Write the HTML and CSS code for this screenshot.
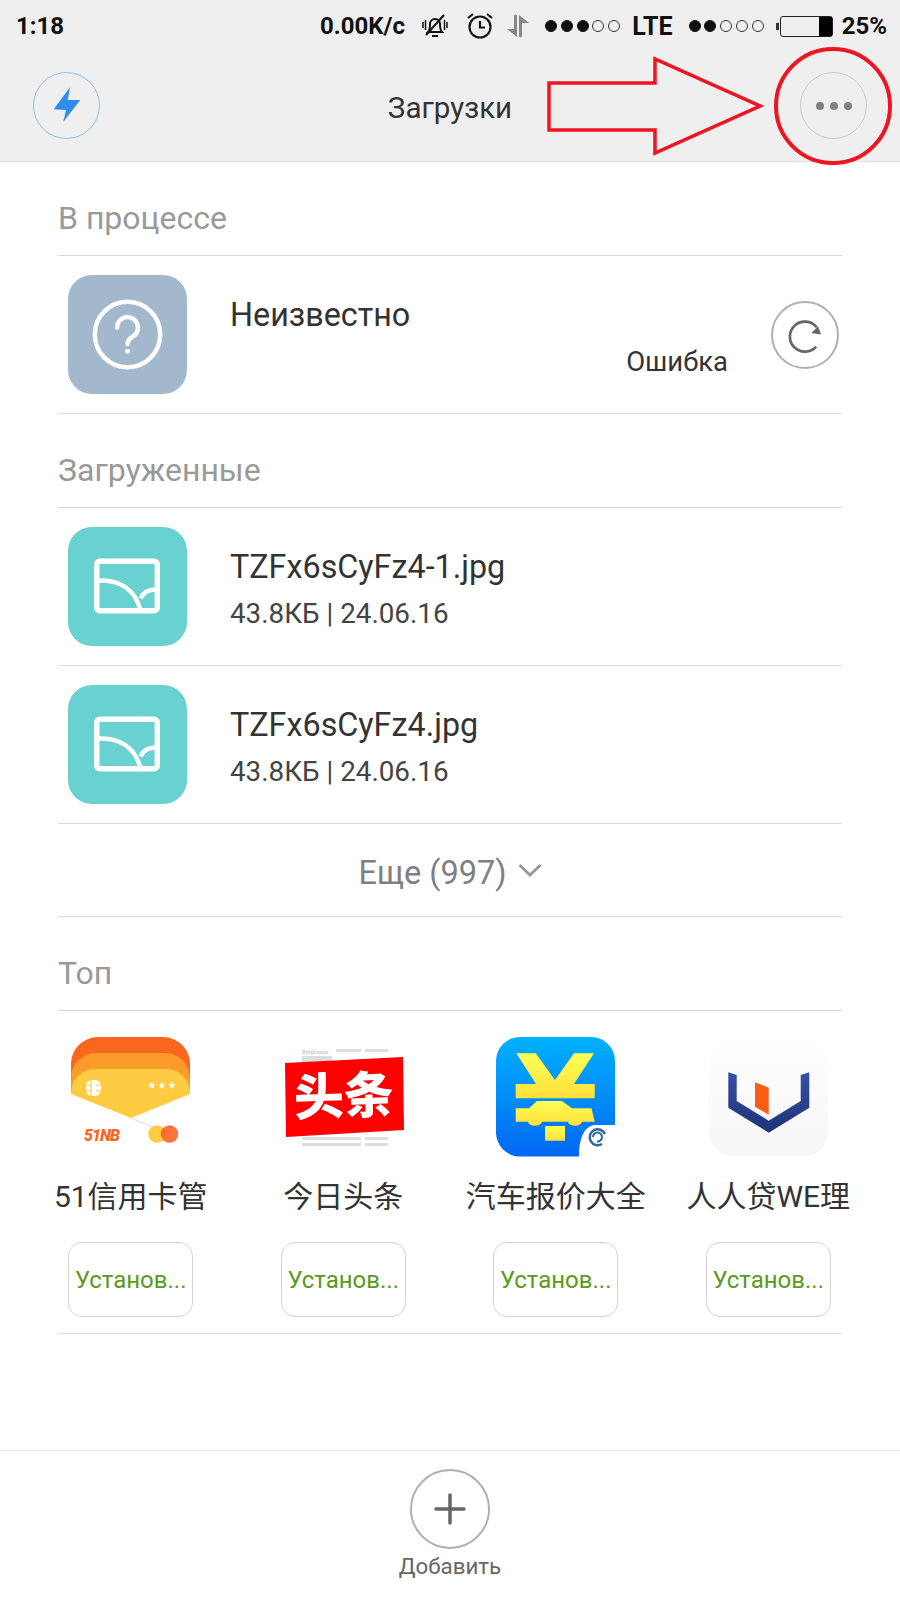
FILE: index.html
```html
<!DOCTYPE html>
<html lang="ru">
<head>
  <meta charset="UTF-8" />
  <meta name="viewport" content="width=device-width, initial-scale=1.0" />
  <title>Загрузки</title>
  <link rel="stylesheet" href="styles.css">
</head>
<body>
  <header class="top">
    <div class="status-bar">
      <span class="time">1:18</span>
      <span class="speed">0.00K/с</span>
      <svg class="st-bell" width="28" height="28" viewBox="0 0 28 28" fill="none" stroke="#111" stroke-width="2">
        <path d="M7 20c2-2 2-4 2-8a5 5 0 0 1 10 0c0 4 0 6 2 8z" />
        <path d="M11 24h6" />
        <path d="M5 23L23 3" />
        <path d="M2 10v6M4.500 8v10M26 10v6M23.500 8v10" stroke-width="1.500" />
      </svg>
      <svg class="st-alarm" width="28" height="28" viewBox="0 0 28 28" fill="none" stroke="#111" stroke-width="2.200">
        <circle cx="14" cy="15" r="10.500" />
        <path d="M14 9v6.500h5" />
        <path d="M2 6l5-4M26 6l-5-4" />
      </svg>
      <svg class="st-arrows" width="24" height="24" viewBox="0 0 24 24" fill="#888">
        <path d="M8 1h3v22L1 15h7z" />
        <path d="M13 1l10 8h-7v14h-3z" />
      </svg>
      <span class="signal signal-first"><i class="on"></i><i class="on"></i><i class="on"></i><i></i><i></i></span>
      <span class="lte">LTE</span>
      <span class="signal signal-second"><i class="on"></i><i class="on"></i><i></i><i></i><i></i></span>
      <span class="battery"><span class="battery-level"></span></span>
      <span class="percent">25%</span>
    </div>
    <div class="nav">
      <div class="nav-btn nav-btn-blue">
        <svg width="66" height="66" viewBox="0 0 66 66"><path fill="#2d8ded" d="M36 14.300L19.700 36.300L32 37L29.300 48.700L46.300 27L33.700 27z" /></svg>
      </div>
      <div class="nav-title">Загрузки</div>
      <div class="nav-btn nav-btn-more"><i></i><i></i><i></i></div>
    </div>
  </header>

  <!-- red marks drawn over the screenshot -->
  <svg class="annotation" width="900" height="170" viewBox="0 0 900 170" fill="none" stroke="#ed1522">
    <path d="M549 83H655V59L760 106L655 153V130H549z" stroke-width="3.500" />
    <circle cx="833" cy="106" r="57" stroke-width="4" />
  </svg>

  <main class="content">
    <h2 class="section-title">В процессе</h2>
    <div class="row">
      <div class="file-icon file-icon-unknown">
        <svg viewBox="0 0 120 120" fill="none" stroke="#fff" stroke-width="4.500" stroke-linecap="round">
          <circle cx="60" cy="60" r="33" />
          <path d="M49.500 53a10.500 10.500 0 1 1 16.500 8.600c-3.500 2.400-6 3.700-6 8" />
          <circle cx="60" cy="77" r="1.500" fill="#fff" stroke-width="2" />
        </svg>
      </div>
      <div class="file-info file-info-unknown">
        <div class="file-name">Неизвестно</div>
      </div>
      <div class="file-error">Ошибка</div>
      <div class="retry">
        <svg width="64" height="64" viewBox="0 0 66 66" fill="none" stroke="#666" stroke-width="2.800">
          <path d="M44.500 45A15.500 15.500 0 1 1 45 25" />
          <path d="M39.500 31L49.500 32.500L46.500 24z" fill="#666" stroke="none" />
        </svg>
      </div>
    </div>

    <h2 class="section-title">Загруженные</h2>
    <div class="row">
      <div class="file-icon file-icon-image">
        <svg viewBox="0 0 120 120" fill="none" stroke="#fff" stroke-width="5.500">
          <rect x="29" y="34.500" width="61" height="50" rx="3" />
          <path d="M31 54C52 53 68 63 73 84" stroke-width="4.500" />
          <path d="M73 72C76 66 81 63 88 63" stroke-width="4.500" />
        </svg>
      </div>
      <div class="file-info">
        <div class="file-name">TZFx6sCyFz4-1.jpg</div>
        <div class="file-meta">43.8КБ | 24.06.16</div>
      </div>
    </div>
    <div class="row">
      <div class="file-icon file-icon-image">
        <svg viewBox="0 0 120 120" fill="none" stroke="#fff" stroke-width="5.500">
          <rect x="29" y="34.500" width="61" height="50" rx="3" />
          <path d="M31 54C52 53 68 63 73 84" stroke-width="4.500" />
          <path d="M73 72C76 66 81 63 88 63" stroke-width="4.500" />
        </svg>
      </div>
      <div class="file-info">
        <div class="file-name">TZFx6sCyFz4.jpg</div>
        <div class="file-meta">43.8КБ | 24.06.16</div>
      </div>
    </div>
    <div class="more">
      <span>Еще (997)</span>
      <svg width="24" height="14" viewBox="0 0 24 14" fill="none" stroke="#999" stroke-width="2.800"><path d="M1.500 2L12 12L22.500 2" /></svg>
    </div>

    <h2 class="section-title">Топ</h2>
    <div class="apps">
      <div class="app">
        <svg class="app-icon" width="120" height="120" viewBox="0 0 120 120">
          <path fill="#fb671f" d="M0 50V28A27 27 0 0 1 27 0H92A27 27 0 0 1 119 28V50z" />
          <path fill="#fd9a2c" d="M0 55V41A25 25 0 0 1 25 16H94A25 25 0 0 1 119 41V55z" />
          <path fill="#ffcb40" d="M0 57V56A24 24 0 0 1 24 32H95A24 24 0 0 1 119 56V57L60 81z" />
          <path stroke="#e8e8e8" stroke-width="1.500" d="M60 81L82 90" />
          <rect x="15" y="43" width="15" height="16" rx="6" fill="#fff" />
          <path stroke="#ffcb40" stroke-width="1.200" d="M15 48h5M15 54h5M25 48h5M25 54h5M20 43v16" />
          <g class="logo-stars">
            <text x="81" y="56">*</text>
            <text x="91" y="56">*</text>
            <text x="101" y="56">*</text>
          </g>
          <text class="logo-51" x="13" y="104">51NB</text>
          <circle cx="86" cy="97" r="8.700" fill="#ffcb40" />
          <circle cx="98.500" cy="97" r="8.700" fill="#fc5a1c" fill-opacity=".85" />
        </svg>
        <div class="app-name">51信用卡管</div>
        <div class="install">Установ...</div>
      </div>
      <div class="app">
        <svg class="app-icon" width="120" height="120" viewBox="0 0 120 120">
          <text class="logo-bd" x="18" y="17">ByteDance</text>
          <path fill="#ddd" d="M52 12h25v3H52zM81 12h23v3H81zM18 19h30v6H18zM18 100h59v3H18zM81 100h23v3H81zM18 106h59v3H18zM81 106h23v3H81z" />
          <path fill="#fe0000" d="M1 26L119 20L120 93L2 100z" />
          <text class="logo-tt" x="60" y="77" transform="rotate(-2 60 60)">头条</text>
        </svg>
        <div class="app-name">今日头条</div>
        <div class="install">Установ...</div>
      </div>
      <div class="app">
        <svg class="app-icon" width="120" height="120" viewBox="0 0 120 120">
          <defs>
            <linearGradient id="carBlue" x1="0" y1="0" x2="0" y2="1">
              <stop offset="0" stop-color="#00b1ff" />
              <stop offset="1" stop-color="#0068f2" />
            </linearGradient>
            <linearGradient id="carYellow" x1="0" y1="0" x2="0" y2="1">
              <stop offset="0" stop-color="#ffff55" />
              <stop offset="1" stop-color="#ffdf3c" />
            </linearGradient>
          </defs>
          <path fill="url(#carBlue)" d="M24 0H95A24 24 0 0 1 119 24V88H100C90 88 83 98 83 119.500H24A24 24 0 0 1 0 95V24A24 24 0 0 1 24 0z" />
          <g fill="url(#carYellow)">
            <path d="M20.300 16.300H39.700L59 43L78 16.300H98L78 47H98.700V61.300H19.700V47H40z" />
            <path d="M19.700 71.300H33L41 64H66L76 71.300H95.500L98.700 84.700H86A7 4 0 0 1 72 84.700H46A7 4 0 0 1 32 84.700H19.700z" />
            <path d="M49 89H69V103.700H49z" />
          </g>
          <g fill="none" stroke="#2c6a9f">
            <path d="M109 97A8 8 0 1 0 106 107" stroke-width="2.500" />
            <path d="M97 100A4.500 4.500 0 1 1 101 104.500" stroke-width="2" />
          </g>
        </svg>
        <div class="app-name">汽车报价大全</div>
        <div class="install">Установ...</div>
      </div>
      <div class="app">
        <svg class="app-icon" width="120" height="120" viewBox="0 0 120 120">
          <defs>
            <linearGradient id="weBg" x1="0" y1="0" x2="0" y2="1">
              <stop offset="0" stop-color="#fff" />
              <stop offset="1" stop-color="#f6f6f8" />
            </linearGradient>
            <linearGradient id="weBlue" x1="0" y1="0" x2="0" y2="1">
              <stop offset="0" stop-color="#3350a8" />
              <stop offset="1" stop-color="#1f3475" />
            </linearGradient>
          </defs>
          <rect width="119" height="119" rx="24" fill="url(#weBg)" />
          <path fill="url(#weBlue)" d="M19.300 35.300L27.700 38V64L59.700 83.700L91.700 64V38L100.300 35.300V70.700L59.700 95.700L19.300 70.700z" />
          <path fill="#fb5d14" d="M46 45.300L59.700 50.700V77.700L46 69.700z" />
        </svg>
        <div class="app-name">人人贷WE理</div>
        <div class="install">Установ...</div>
      </div>
    </div>
  </main>

  <footer class="bottom">
    <div class="add-btn">
      <svg width="76" height="76" viewBox="0 0 76 76" stroke="#666" stroke-width="3.500" stroke-linecap="round"><path d="M38 24V52M24 38H52" /></svg>
    </div>
    <div class="add-label">Добавить</div>
  </footer>
</body>
</html>
```

FILE: styles.css
```css
body {
  font-family: Roboto, "Noto Sans CJK SC", sans-serif;
  background-color: #fff;
  margin: 0;
  width: 900px;
  min-height: 1600px;
  display: flex;
  flex-direction: column;
  position: relative;
  color: #333;
}

/* header */
.top {
  background: #efefef;
  height: 161px;
  border-bottom: 1px solid #ddd;
}
.status-bar {
  height: 52px;
  display: flex;
  align-items: center;
  color: #111;
  font-size: 24px;
  font-weight: 700;
  padding-left: 16px;
}
.speed { margin-left: 256px; }
.st-bell { margin-left: 16px; }
.st-alarm { margin-left: 17px; }
.st-arrows { margin-left: 12px; }
.signal { display: flex; gap: 3.800px; }
.signal i {
  width: 12px;
  height: 12px;
  box-sizing: border-box;
  border: 1px solid #333;
  border-radius: 50%;
}
.signal i.on { background: #111; border-color: #111; }
.signal-first { margin-left: 15px; }
.lte { margin-left: 12px; font-size: 25px; }
.signal-second { margin-left: 16px; }
.battery {
  width: 53px;
  height: 21px;
  box-sizing: border-box;
  border: 1px solid #222;
  border-radius: 3px;
  margin-left: 16px;
  display: flex;
  justify-content: flex-end;
  position: relative;
}
.battery::before {
  content: "";
  position: absolute;
  left: -5px;
  top: 6px;
  width: 3px;
  height: 7px;
  background: #333;
}
.battery-level { width: 13px; background: #000; }
.percent { margin-left: 9px; }

.nav {
  height: 109px;
  display: flex;
  align-items: center;
  justify-content: space-between;
  padding: 0 33px;
  position: relative;
}
.nav-btn {
  width: 67px;
  height: 67px;
  box-sizing: border-box;
  border-radius: 50%;
  display: flex;
  align-items: center;
  justify-content: center;
  margin-bottom: 2px;
}
.nav-btn-blue { border: 1.500px solid #8cc0f0; }
.nav-btn-blue svg { margin: -1px; }
.nav-btn-more { border: 1.500px solid #ccc; gap: 6px; }
.nav-btn-more i {
  width: 8px;
  height: 8px;
  border-radius: 50%;
  background: #808080;
}
.nav-title {
  font-size: 29.500px;
  color: #333;
  margin-top: 2px;
}
.annotation {
  position: absolute;
  left: 0;
  top: 0;
}

/* lists */
.content {
  padding: 0 58px;
}
.section-title {
  margin: 0;
  height: 94px;
  box-sizing: border-box;
  padding-top: 36px;
  font-size: 32px;
  line-height: 40px;
  font-weight: 400;
  color: #999;
  border-bottom: 1px solid #d8d8d8;
}
.row {
  display: flex;
  padding: 19px 0 19px 9.500px;
  border-bottom: 1px solid #ddd;
  position: relative;
}
.file-icon {
  width: 119px;
  height: 119px;
  border-radius: 24px;
  flex-shrink: 0;
}
.file-icon svg { display: block; width: 100%; height: 100%; }
.file-icon-unknown { background: #a3b8cd; }
.file-icon-image { background: #69d2d0; }
.file-info {
  margin-left: 43.500px;
  flex: 1;
  padding-top: 19.500px;
}
.file-info-unknown { padding-top: 20px; }
.file-name {
  font-size: 32.300px;
  line-height: 40px;
  color: #333;
}
.file-meta {
  font-size: 27.800px;
  line-height: 36px;
  margin-top: 9.500px;
  color: #444;
}
.file-error {
  font-size: 27.500px;
  line-height: 36px;
  margin-top: 69px;
  margin-right: 43px;
}
.retry {
  width: 68px;
  height: 68px;
  box-sizing: border-box;
  border: 2px solid #b0b0b0;
  border-radius: 50%;
  align-self: center;
  margin-right: 3px;
}
.more {
  height: 93px;
  box-sizing: border-box;
  padding-top: 5px;
  border-bottom: 1px solid #ddd;
  display: flex;
  align-items: center;
  justify-content: center;
  gap: 13px;
  font-size: 32.500px;
  color: #808080;
}
.more svg { margin-top: -6px; margin-left: -2px; }

/* top apps */
.apps {
  display: grid;
  grid-template-columns: repeat(4, 212.500px);
  margin: 0 -33.500px;
  padding-top: 26px;
  height: 323px;
  box-sizing: border-box;
  position: relative;
}
.apps::after {
  content: "";
  position: absolute;
  left: 33.500px;
  right: 33.500px;
  bottom: 0;
  border-bottom: 1px solid #ddd;
}
.app {
  display: flex;
  flex-direction: column;
  align-items: center;
}
.app-icon { display: block; margin-left: 1px; }
.app-name {
  margin-top: 21px;
  font-size: 30px;
  line-height: 38px;
  color: #333;
  white-space: nowrap;
}
.install {
  margin-top: 26px;
  width: 125px;
  height: 75px;
  box-sizing: border-box;
  border: 1px solid #d4d4d4;
  border-radius: 14px;
  display: flex;
  align-items: center;
  justify-content: center;
  font-size: 24px;
  color: #5a9a1c;
  white-space: nowrap;
}
.logo-stars {
  font-size: 14px;
  font-weight: 700;
  fill: #fff;
  text-anchor: middle;
}
.logo-51 {
  font-size: 16px;
  font-weight: 900;
  font-style: italic;
  fill: #fb671f;
  letter-spacing: -1px;
}
.logo-bd {
  font-size: 5.500px;
  font-weight: 700;
  fill: #ccc;
}
.logo-tt {
  font-family: "Noto Sans CJK SC", sans-serif;
  font-size: 50px;
  font-weight: 900;
  fill: #fff;
  text-anchor: middle;
}

/* bottom bar */
.bottom {
  margin-top: auto;
  height: 150px;
  box-sizing: border-box;
  border-top: 1px solid #e4e4e4;
  padding-top: 18px;
  display: flex;
  flex-direction: column;
  align-items: center;
}
.add-btn {
  width: 80px;
  height: 80px;
  box-sizing: border-box;
  border: 2px solid #b0b0b0;
  border-radius: 50%;
}
.add-label {
  font-size: 22.300px;
  line-height: 30px;
  color: #666;
  margin-top: 2px;
}
```
